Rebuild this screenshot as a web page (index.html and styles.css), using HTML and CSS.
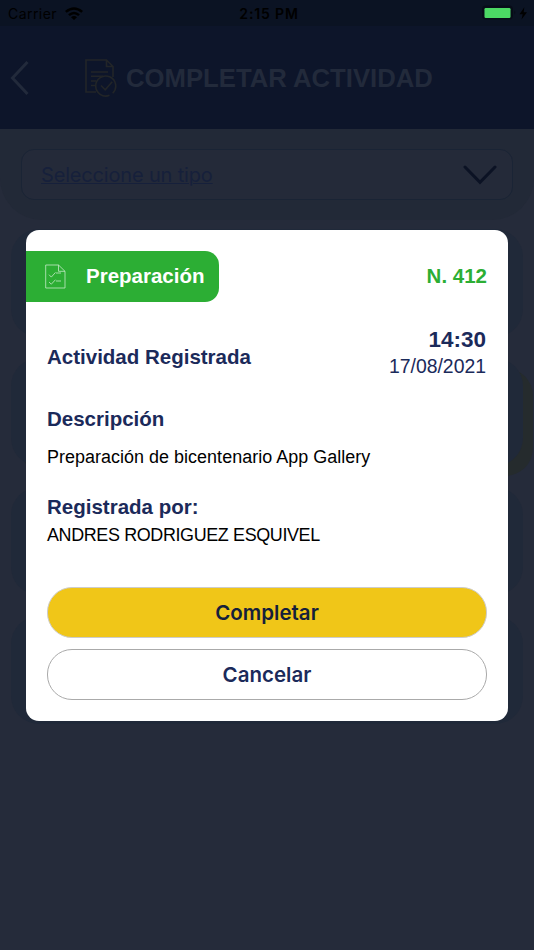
FILE: index.html
```
<!DOCTYPE html>
<html lang="es">
<head>
<meta charset="utf-8">
<title>Completar actividad</title>
<link rel="stylesheet" href="styles.css">
</head>
<body>
<div class="screen">
  <div class="status">
    <div class="carrier"><span class="carrier-name">Carrier</span>
      <svg class="wifi" width="18" height="13" viewBox="0 0 18 13"><path d="M0 4Q9-3.5 18 4L16.3 5.8Q9-.1 1.7 5.8ZM3.1 7.3Q9 2.3 14.9 7.3L13.2 9Q9 5.5 4.8 9ZM6 10.3Q9 7.8 12 10.3L9 13Z"/></svg>
    </div>
    <span class="clock">2:15 PM</span>
    <svg class="battery" width="48" height="16" viewBox="0 0 48 16"><rect x="1" y="1.5" width="29" height="12" rx="3" fill="none" stroke="#070c17" stroke-width="2"/><rect x="2.5" y="3" width="26" height="10" rx="1.2" fill="#4cd964"/><path d="M32.3 5.5Q34.3 7.5 32.3 9.5Z" fill="#070c17"/><path d="M42.3 2.3 37.5 9.2H40.7L39.5 14.5 45 7.2H41.7Z" fill="#000"/></svg>
  </div>
  <header class="header">
    <svg class="back" width="20" height="36" viewBox="0 0 20 36"><path d="M17.5 2 2.5 18l15 16"/></svg>
    <svg class="doc" width="32" height="38" viewBox="0 0 32 38"><path d="M11 33H1V1H21.5L28 7.5V18M21.5 1V7.5H28M6 13H23M6 17.3H18M6 22H11M6 26.5H10"/><path d="M24.5 36.3A10 10 0 1 1 27.7 34.2M16 26.5l4.2 4.3 7-8"/></svg>
    <h1>COMPLETAR ACTIVIDAD</h1>
  </header>
  <section class="filter">
    <div class="select"><span>Seleccione un tipo</span>
      <svg width="34" height="20" viewBox="0 0 34 20"><path d="M2 2 17 17.3 32 2"/></svg>
    </div>
  </section>
  <div class="list">
    <div class="item"></div>
    <div class="item marked"></div>
    <div class="item"></div>
    <div class="item"></div>
  </div>
  <div class="modal">
    <div class="top">
      <div class="tag">
        <svg width="21" height="25" viewBox="0 0 21 25"><path d="M.7 1H13.5L20 7.3V24H.7ZM13.5 1V7.3H20M4 10.7l2.3 2.4L10.5 8.4M11 9H16M4 18l2.3 2.2 4.2-4.5M11 17H16"/></svg>
        <span>Preparación</span>
      </div>
      <span class="number">N. 412</span>
    </div>
    <div class="summary">
      <h2>Actividad Registrada</h2>
      <div class="when"><b>14:30</b><span>17/08/2021</span></div>
    </div>
    <div class="block">
      <h2>Descripción</h2>
      <p class="description">Preparación de bicentenario App Gallery</p>
    </div>
    <div class="block author">
      <h2>Registrada por:</h2>
      <p>ANDRES RODRIGUEZ ESQUIVEL</p>
    </div>
    <div class="actions">
      <button class="primary">Completar</button>
      <button>Cancelar</button>
    </div>
  </div>
</div>
</body>
</html>
```
FILE: styles.css
```
* { box-sizing: border-box; margin: 0; }
body { background: #252b3a; font-family: "Liberation Sans", sans-serif; }
.screen { position: relative; width: 534px; height: 950px; overflow: hidden; }
.status { height: 26px; background: #0b1323; display: grid; grid-template-columns: 1fr auto 1fr; align-items: center; padding: 2px 4px 0 8px; font: 14px/20px Inter, sans-serif; color: #000; }
.carrier { display: flex; align-items: center; gap: 8px; }
.carrier-name { letter-spacing: .45px; }
.wifi { margin-top: -2px; }
.clock { font-weight: 600; letter-spacing: .85px; }
.battery { justify-self: end; margin: -2px 0 0; }
.header { height: 103px; background: #0d152a; display: flex; align-items: center; padding: 0 0 0 10px; color: #222a3b; }
.back { fill: none; stroke: #222a3b; stroke-width: 3; }
.doc { margin-left: 55px; fill: none; stroke: #222528; stroke-width: 1.6; }
h1 { margin-left: 9px; font-size: 25.7px; line-height: 30px; white-space: nowrap; }
.filter { height: 91px; background: #222937; border-radius: 0 0 42px 42px; padding: 20px 21px; }
.select { height: 51px; border: 1px solid #1a2435; border-radius: 13px; background: #242a39; display: flex; align-items: center; justify-content: space-between; padding: 0 15px 0 19px; font: 20px/26px Inter, sans-serif; color: #16203b; }
.select span { letter-spacing: -.17px; text-decoration: underline; text-decoration-thickness: 1px; }
.select svg { fill: none; stroke: #0b1224; stroke-width: 3; stroke-linecap: round; }
.list { display: grid; gap: 21px; padding: 9px 11px; }
.item { height: 108px; border-radius: 28px; background: #202939; }
.marked { box-shadow: 10px 10px 0 #252b2d; }
.modal { position: absolute; left: 26px; top: 230px; width: 482px; height: 490.5px; background: #fff; border-radius: 13px; padding: 21px 21px 0; }
.top { display: flex; justify-content: space-between; align-items: center; height: 51px; font-size: 20.5px; font-weight: 700; }
.top span { padding-bottom: 2px; }
.tag { display: flex; align-items: center; gap: 20px; width: 193px; height: 51px; margin-left: -21px; padding-left: 19px; border-radius: 0 14px 14px 0; background: #2cae34; color: #fff; }
.tag svg { fill: none; stroke: #c4eac6; stroke-width: .8; }
.number { color: #2cae34; }
.summary { display: flex; justify-content: space-between; align-items: center; height: 52px; margin-top: 25px; padding-right: 1px; color: #1b2a5a; }
h2 { font-size: 20.5px; line-height: 24px; color: #1b2a5a; }
.summary h2 { margin-top: 8px; }
.when { display: grid; justify-items: end; line-height: 26px; font-size: 19.4px; }
.when b { font-size: 22.5px; }
.block { margin-top: 28px; }
.block p { margin-top: 15px; font-size: 17.95px; line-height: 22px; color: #000; }
.block .description { letter-spacing: .03px; }
.author { margin-top: 27px; }
.author p { margin-top: 5px; letter-spacing: -.37px; }
.actions { display: grid; gap: 11px; margin-top: 41px; }
button { height: 51px; border: 1px solid #aaa; border-radius: 25px; background: #fff; color: #1b2a5a; font: 600 20.5px/24px Inter, sans-serif; }
.primary { background: #f0c618; border-color: #ccc; color: #15203b; }
```
